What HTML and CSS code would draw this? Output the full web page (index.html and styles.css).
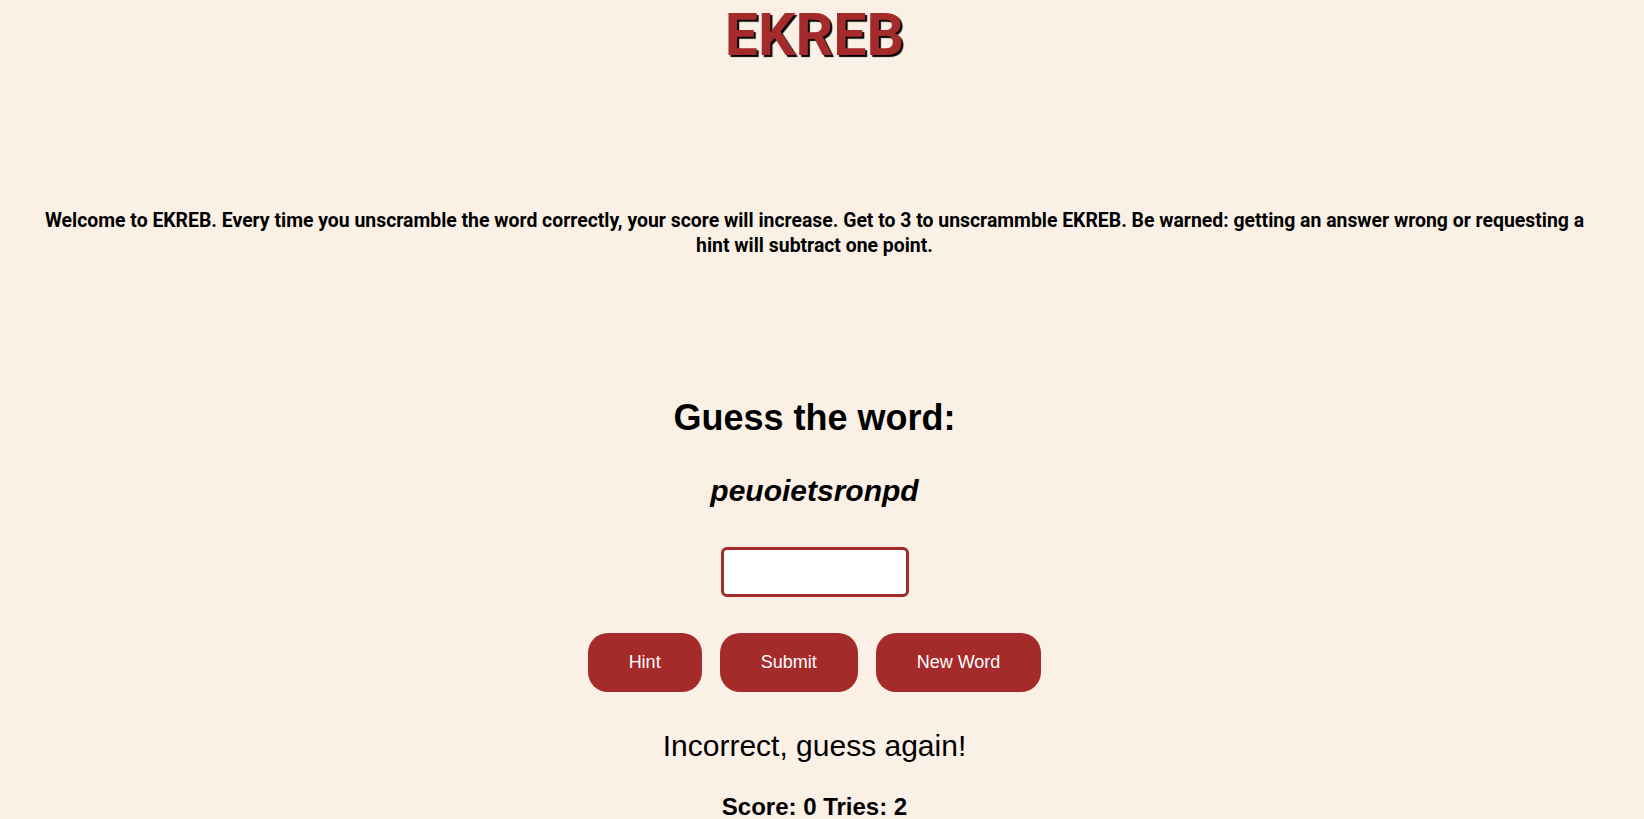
FILE: index.html
```html
<!DOCTYPE html>
<html lang="en">
<head>
<meta charset="utf-8">
<title>EKREB</title>
<link rel="stylesheet" href="styles.css">
</head>
<body>
<div class="page">
  <header class="site-header">
    <h1 class="logo">EKREB</h1>
  </header>
  <section class="intro">
    <p>Welcome to EKREB. Every time you unscramble the word correctly, your score will increase. Get to 3 to unscrammble EKREB. Be warned: getting an answer wrong or requesting a hint will subtract one point.</p>
  </section>
  <main class="game">
    <h2 class="prompt">Guess the word:</h2>
    <p class="scrambled">peuoietsronpd</p>
    <input class="guess" type="text" aria-label="Your guess">
    <div class="actions">
      <button class="btn" type="button">Hint</button>
      <button class="btn" type="button">Submit</button>
      <button class="btn" type="button">New Word</button>
    </div>
    <p class="feedback">Incorrect, guess again!</p>
    <p class="stats">Score: 0 Tries: 2</p>
  </main>
</div>
</body>
</html>
```
FILE: styles.css
```css
html, body {
  margin: 0;
  padding: 0;
  background: #faf0e6;
}

body {
  color: #000;
  font-family: "Liberation Sans", Arial, sans-serif;
}

.page {
  padding-right: 15px;
  display: flex;
  flex-direction: column;
  align-items: center;
  text-align: center;
}

.site-header {
  width: 100%;
}

.logo {
  margin: 0;
  font-family: Roboto, "Liberation Sans", sans-serif;
  font-weight: 700;
  font-size: 59px;
  line-height: 70px;
  color: #a52a2a;
  text-shadow: 2px 2px 1px #000;
}

.intro {
  width: 100%;
  box-sizing: border-box;
  padding: 0 40px;
  margin-top: 138px;
}

.intro p {
  margin: 0;
  font-family: Roboto, "Liberation Sans", sans-serif;
  font-weight: 700;
  font-size: 19.4px;
  line-height: 25px;
}

.game {
  display: flex;
  flex-direction: column;
  align-items: center;
}

.prompt {
  margin: 140px 0 0;
  font-size: 36px;
  line-height: 40px;
  font-weight: 700;
}

.scrambled {
  margin: 36px 0 0;
  font-size: 30px;
  line-height: 34px;
  font-weight: 700;
  font-style: italic;
}

.guess {
  margin-top: 39px;
  width: 188px;
  height: 50px;
  box-sizing: border-box;
  border: 3px solid #a52a2a;
  border-radius: 6px;
  background: #fff;
  font-size: 18px;
  padding: 0 8px;
}

.actions {
  margin-top: 36px;
  display: flex;
  gap: 18px;
}

.btn {
  height: 59px;
  padding: 0 41px;
  border: none;
  border-radius: 20px;
  background: #a52a2a;
  color: #fff;
  font-family: "Liberation Sans", Arial, sans-serif;
  font-size: 18px;
  cursor: pointer;
}

.feedback {
  margin: 37px 0 0;
  font-size: 30px;
  line-height: 34px;
}

.stats {
  margin: 30px 0 0;
  font-size: 24px;
  line-height: 28px;
  font-weight: 700;
}
```
